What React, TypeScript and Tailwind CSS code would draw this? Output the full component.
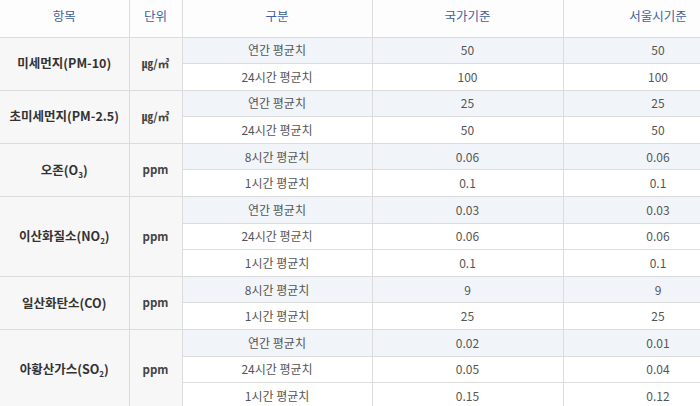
import React from "react";

type Group = {
  name: React.ReactNode;
  unit: React.ReactNode;
  rows: [string, string, string][];
};

const sub = (t: string) => <sub className="text-[8px] align-[-1px] font-semibold">{t}</sub>;

const groups: Group[] = [
  {
    name: "미세먼지(PM-10)",
    unit: "㎍/㎥",
    rows: [
      ["연간 평균치", "50", "50"],
      ["24시간 평균치", "100", "100"],
    ],
  },
  {
    name: "초미세먼지(PM-2.5)",
    unit: "㎍/㎥",
    rows: [
      ["연간 평균치", "25", "25"],
      ["24시간 평균치", "50", "50"],
    ],
  },
  {
    name: <>오존(O{sub("3")})</>,
    unit: "ppm",
    rows: [
      ["8시간 평균치", "0.06", "0.06"],
      ["1시간 평균치", "0.1", "0.1"],
    ],
  },
  {
    name: <>이산화질소(NO{sub("2")})</>,
    unit: "ppm",
    rows: [
      ["연간 평균치", "0.03", "0.03"],
      ["24시간 평균치", "0.06", "0.06"],
      ["1시간 평균치", "0.1", "0.1"],
    ],
  },
  {
    name: "일산화탄소(CO)",
    unit: "ppm",
    rows: [
      ["8시간 평균치", "9", "9"],
      ["1시간 평균치", "25", "25"],
    ],
  },
  {
    name: <>아황산가스(SO{sub("2")})</>,
    unit: "ppm",
    rows: [
      ["연간 평균치", "0.02", "0.01"],
      ["24시간 평균치", "0.05", "0.04"],
      ["1시간 평균치", "0.15", "0.12"],
    ],
  },
];

export default function App() {
  return (
    <div
      className="w-[700px] h-[406px] overflow-hidden bg-white"
      style={{ fontFamily: '"Noto Sans CJK KR", "Noto Sans", sans-serif' }}
    >
      <table className="border-collapse table-fixed w-[753px] text-center">
        <colgroup>
          <col className="w-[129px]" />
          <col className="w-[53px]" />
          <col className="w-[190px]" />
          <col className="w-[191px]" />
          <col className="w-[190px]" />
        </colgroup>
        <thead>
          <tr className="h-[37px] bg-[#fdfdfd]">
            {["항목", "단위", "구분", "국가기준", "서울시기준"].map((h) => (
              <th
                key={h}
                className="border-x border-b border-[#dcdcdc] first:border-l-0 text-[12.5px] font-normal text-[#40609f] pb-[3px]"
              >
                {h}
              </th>
            ))}
          </tr>
        </thead>
        <tbody>
          {groups.map((g, gi) =>
            g.rows.map((r, ri) => (
              <tr
                key={`${gi}-${ri}`}
                className={`h-[26.6px] ${ri === 0 ? "bg-[#f1f5f9]" : "bg-white"}`}
              >
                {ri === 0 && (
                  <>
                    <td
                      rowSpan={g.rows.length}
                      className="border border-l-0 border-[#dcdcdc] bg-[#f7f7f7] text-[12.5px] font-bold text-[#333]"
                    >
                      {g.name}
                    </td>
                    <td
                      rowSpan={g.rows.length}
                      className="border border-[#dcdcdc] bg-[#f7f7f7] text-[11.5px] font-bold text-[#444]"
                    >
                      {g.unit}
                    </td>
                  </>
                )}
                <td className="border border-[#dcdcdc] text-[12px] text-[#555] p-0">{r[0]}</td>
                <td className="border border-[#dcdcdc] text-[12px] text-[#555] p-0">{r[1]}</td>
                <td className="border border-[#dcdcdc] text-[12px] text-[#555] p-0">{r[2]}</td>
              </tr>
            ))
          )}
        </tbody>
      </table>
    </div>
  );
}
